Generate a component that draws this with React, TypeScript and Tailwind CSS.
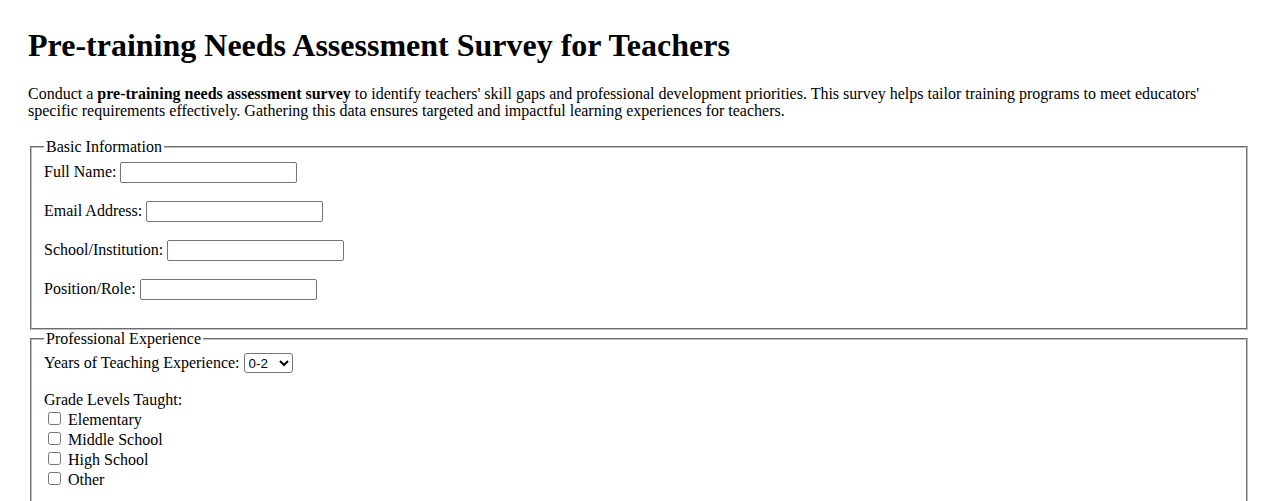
import React from "react";

const fieldInput =
  "inline-block align-baseline w-[177px] h-[21px] px-[2px] py-[1px] border border-[#767676] rounded-[2px] bg-white text-[13.33px] leading-[1.15] [font-family:Arial,'Liberation_Sans',sans-serif]";

const checkbox = "align-baseline m-[3px_3px_3px_4px] w-[13px] h-[13px]";

// one empty line of body text, the gap that follows each field
const BlankLine = () => <div className="h-[18px]" />;

function TextRow({ label, id }: { label: string; id: string }) {
  return (
    <>
      <div className="h-[21px] leading-[18px]">
        <label htmlFor={id}>{label}</label> <input id={id} type="text" className={fieldInput} />
      </div>
      <BlankLine />
    </>
  );
}

export default function App() {
  return (
    <div className="min-h-[501px] bg-white text-black text-[16px] leading-[18px] [font-family:'Liberation_Serif','Times_New_Roman',serif] px-[28px] pt-[27px]">
      <h1 className="text-[32px] font-bold leading-[1.15] mb-[21.44px]">
        Pre-training Needs Assessment Survey for Teachers
      </h1>
      <p className="leading-[17px] mb-[19px]">
        Conduct a <strong className="font-bold">pre-training needs assessment survey</strong> to identify
        teachers' skill gaps and professional development priorities. This survey helps tailor training
        programs to meet educators' specific requirements effectively. Gathering this data ensures targeted and
        impactful learning experiences for teachers.
      </p>

      <form>
        <fieldset className="mx-[2px] border-2 [border-style:groove] border-[#c0c0c0] px-[12px] pt-[5.6px] pb-[10px]">
          <legend className="px-[2px]">Basic Information</legend>
          <TextRow label="Full Name:" id="fullName" />
          <TextRow label="Email Address:" id="email" />
          <TextRow label="School/Institution:" id="school" />
          <TextRow label="Position/Role:" id="role" />
        </fieldset>

        <fieldset className="mx-[2px] border-2 [border-style:groove] border-[#c0c0c0] px-[12px] pt-[5.6px] pb-[10px]">
          <legend className="px-[2px]">Professional Experience</legend>
          <div className="h-[20px]">
            <label htmlFor="years">Years of Teaching Experience:</label>{" "}
            <select
              id="years"
              className="align-baseline h-[20px] w-[49px] border border-[#767676] rounded-[3px] bg-white text-[13.33px] [font-family:Arial,'Liberation_Sans',sans-serif]"
              defaultValue="0-2"
            >
              <option value="0-2">0-2</option>
              <option value="3-5">3-5</option>
              <option value="6-10">6-10</option>
              <option value="10+">10+</option>
            </select>
          </div>
          <BlankLine />
          <div>Grade Levels Taught:</div>
          {["Elementary", "Middle School", "High School", "Other"].map((g) => (
            <div key={g} className="h-[20px]">
              <label>
                <input type="checkbox" className={checkbox} /> {g}
              </label>
            </div>
          ))}
          <BlankLine />
        </fieldset>
      </form>
    </div>
  );
}
